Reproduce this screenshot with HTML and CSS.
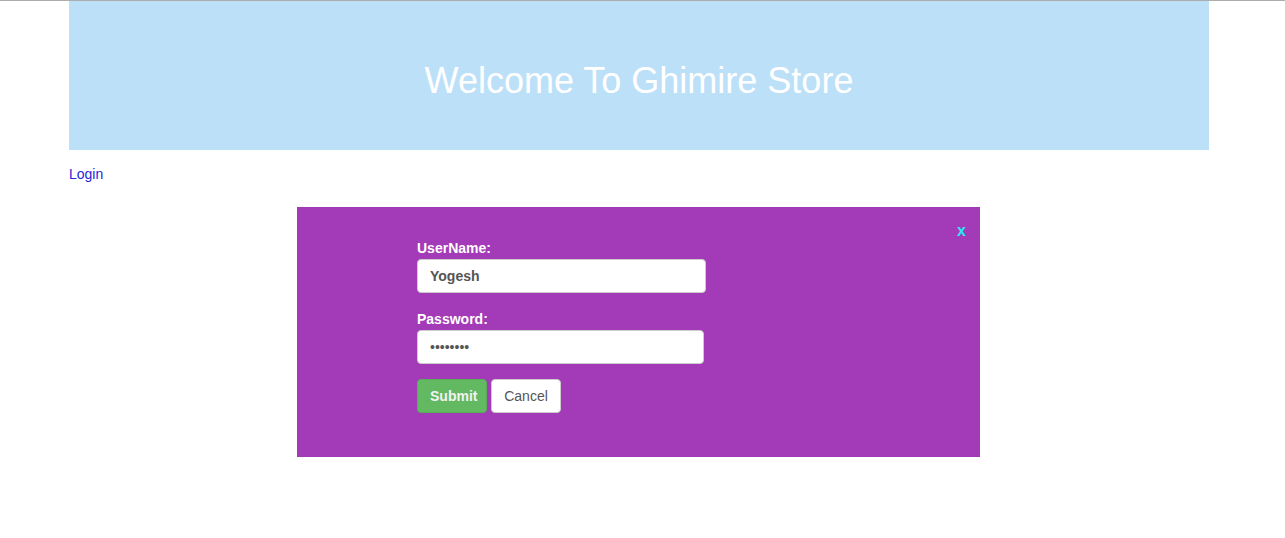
FILE: index.html
```html
<!DOCTYPE html>
<html>
<head>
<meta charset="utf-8">
<link rel="stylesheet" href="styles.css">
</head>
<body>
<div class="topline"></div>
<div class="container">
  <header class="banner"><h1>Welcome To Ghimire Store</h1></header>
  <nav class="nav"><a href="#" class="login">Login</a></nav>
  <div class="modal">
    <a href="#" class="close">x</a>
    <form class="form">
      <label class="label">UserName:</label>
      <input class="input user" type="text" value="Yogesh">
      <label class="label">Password:</label>
      <input class="input pass" type="password" value="12345678">
      <div class="actions">
        <button type="button" class="btn submit">Submit</button>
        <button type="button" class="btn cancel">Cancel</button>
      </div>
    </form>
  </div>
</div>
</body>
</html>
```
FILE: styles.css
```css
html, body { margin: 0; padding: 0; background: #fff; }
body { font-family: "Liberation Sans", Arial, sans-serif; font-size: 14px; }
.topline { height: 1px; background: #acacac; }
.container { width: 1140px; margin-left: 69px; }
.banner { height: 149px; background: #bde0f9; display: flex; align-items: center; justify-content: center; }
.banner h1 { margin: 0; color: #fff; font-weight: normal; font-size: 36px; padding-top: 10px; }
.nav { padding-top: 14px; height: 43px; }
.login { color: #2626d6; text-decoration: none; font-size: 14px; line-height: 20px; }
.modal { position: relative; width: 683px; height: 250px; margin-left: 228px; background: #a33ab7; box-sizing: border-box; padding: 31px 0 0 120px; }
.close { position: absolute; right: 14px; top: 15px; color: #2ee6f2; font-weight: bold; font-size: 16px; text-decoration: none; }
.form { display: flex; flex-direction: column; align-items: flex-start; }
.label { color: #fff; font-weight: bold; line-height: 20px; margin-bottom: 1px; }
.input { box-sizing: border-box; height: 34px; border: 1px solid #ccc; border-radius: 4px; padding: 6px 12px; font-family: inherit; font-size: 14px; color: #555; background: #fff; outline: none; }
.user { width: 289px; font-weight: bold; margin-bottom: 16px; }
.pass { width: 287px; margin-bottom: 15px; }
.actions { display: flex; gap: 4px; }
.btn { height: 34px; border-radius: 4px; font-family: inherit; font-size: 14px; padding: 6px 12px; border: 1px solid #ccc; }
.submit { width: 70px; background: #62b962; border-color: #55b055; color: #f2f2f2; font-weight: bold; }
.cancel { width: 70px; background: #fff; color: #555; }
```
